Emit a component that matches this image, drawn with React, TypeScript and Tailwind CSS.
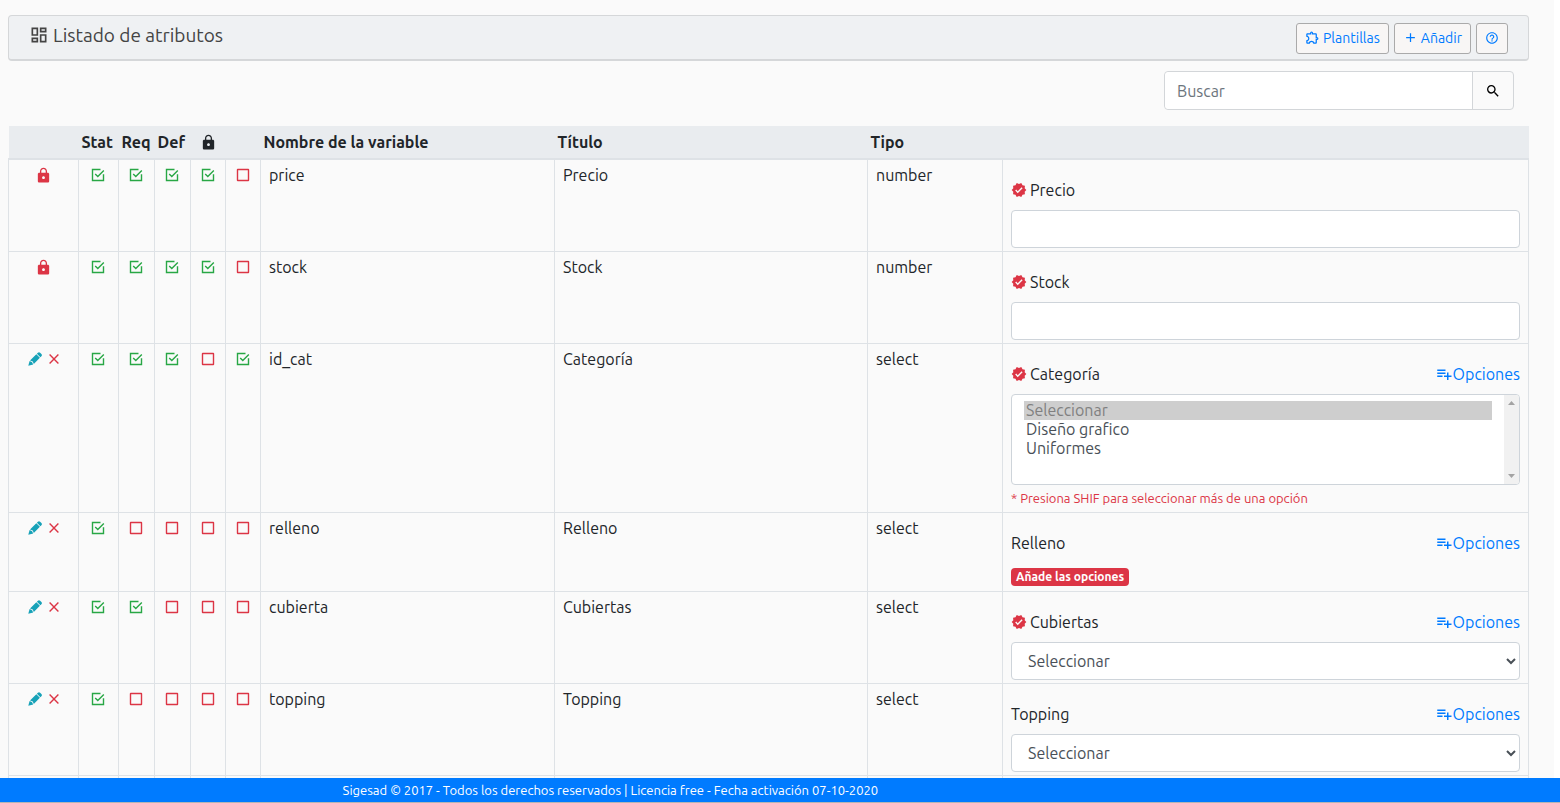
import { useState } from "react";
import {
  MdAdd,
  MdHelpOutline,
  MdLock,
  MdOutlineDashboard,
  MdOutlineExtension,
  MdPlaylistAdd,
  MdSearch,
  MdVerified,
} from "react-icons/md";

type TField = "input" | "multiple" | "empty" | "select";

type TAttribute = {
  name: string;
  title: string;
  type: string;
  locked: boolean;
  required: boolean;
  checks: boolean[];
  field: TField;
};

const attributes: TAttribute[] = [
  { name: "price", title: "Precio", type: "number", locked: true, required: true, checks: [true, true, true, true, false], field: "input" },
  { name: "stock", title: "Stock", type: "number", locked: true, required: true, checks: [true, true, true, true, false], field: "input" },
  { name: "id_cat", title: "Categoría", type: "select", locked: false, required: true, checks: [true, true, true, false, true], field: "multiple" },
  { name: "relleno", title: "Relleno", type: "select", locked: false, required: false, checks: [true, false, false, false, false], field: "empty" },
  { name: "cubierta", title: "Cubiertas", type: "select", locked: false, required: true, checks: [true, true, false, false, false], field: "select" },
  { name: "topping", title: "Topping", type: "select", locked: false, required: false, checks: [true, false, false, false, false], field: "select" },
];

const checkNames = ["Estado", "Requerido", "Defecto", "Bloqueado", "Visible"];

const PencilIcon = () => (
  <svg viewBox="0 0 14 14" className="h-3.5 w-3.5" fill="currentColor">
    <path d="M8.9 1.7 9.9.8a1.6 1.6 0 0 1 2.2 0l1.3 1.3a1.6 1.6 0 0 1 0 2.2l-1 1z" />
    <path d="M8.3 2.2 11.9 5.8 5.8 11.9 4.8 9.5 2 8.4z" />
    <path d="M1.6 9.1 4.1 10.2 5.2 12.4 .3 13.7z" />
  </svg>
);

const CrossIcon = () => (
  <svg viewBox="0 0 10 10" className="h-2.5 w-2.5" fill="none" stroke="currentColor" strokeWidth="1.4">
    <path d="M.6.6 9.4 9.4M9.4.6.6 9.4" />
  </svg>
);

const CheckBox = ({ label, defaultChecked }: { label: string; defaultChecked: boolean }) => {
  const [checked, setChecked] = useState<boolean>(defaultChecked);

  return (
    <span className="inline-grid">
      <input
        type="checkbox"
        aria-label={label}
        checked={checked}
        onChange={() => setChecked(!checked)}
        className="col-start-1 row-start-1 h-3.5 w-3.5 cursor-pointer appearance-none"
      />
      {checked ? (
        <svg viewBox="0 0 14 14" className="pointer-events-none col-start-1 row-start-1 h-3.5 w-3.5 text-[#28a745]" fill="none" stroke="currentColor" strokeWidth="1.4">
          <path d="M9.5 1.5h-8v11h11V6.2" />
          <path d="M4.2 6 6.8 8.5 12.8 2.4" />
        </svg>
      ) : (
        <svg viewBox="0 0 14 14" className="pointer-events-none col-start-1 row-start-1 h-3.5 w-3.5 text-[#dc3545]" fill="none" stroke="currentColor" strokeWidth="1.4">
          <rect x="1.5" y="1.5" width="11" height="11" rx=".3" />
        </svg>
      )}
    </span>
  );
};

const Field = ({ item }: { item: TAttribute }) => {
  const id = `field-${item.name}`;

  return (
    <div className="pt-[18px] pb-[3px]">
      <div className="mb-2 flex h-6 items-center justify-between">
        <label htmlFor={id} className="flex items-center gap-[3px]">
          {item.required && <MdVerified className="h-4 w-4 text-[#dc3545]" />}
          {item.title}
        </label>
        {item.type === "select" && (
          <a href="#opciones" className="flex items-center text-[#007bff]">
            <MdPlaylistAdd className="h-[18px] w-[18px]" />
            Opciones
          </a>
        )}
      </div>

      {item.field === "input" && (
        <input
          id={id}
          type="text"
          className="block h-[38px] w-full rounded border border-[#ced4da] bg-white px-3 text-[#495057]"
        />
      )}

      {item.field === "multiple" && (
        <>
          <div className="flex h-[91px] overflow-hidden rounded border border-[#ced4da] bg-white">
            <select
              id={id}
              multiple
              size={4}
              defaultValue={["0"]}
              className="min-w-0 flex-1 px-3 py-1.5 text-[#495057] [&>option]:px-0.5"
            >
              <option value="0" disabled>
                Seleccionar
              </option>
              <option value="1">Diseño grafico</option>
              <option value="2">Uniformes</option>
            </select>
            {/* Scroll rail */}
            <div className="flex w-[15px] flex-col items-center justify-between bg-[#f1f1f1] py-1.5 text-[#a3a3a3]">
              <svg viewBox="0 0 7 4" className="h-1 w-[7px]" fill="currentColor">
                <path d="M0 4 3.5 0 7 4z" />
              </svg>
              <svg viewBox="0 0 7 4" className="h-1 w-[7px]" fill="currentColor">
                <path d="M0 0 3.5 4 7 0z" />
              </svg>
            </div>
          </div>
          <small className="mt-[3px] mb-px block text-[13px] leading-5 text-[#dc3545]">
            * Presiona SHIF para seleccionar más de una opción
          </small>
        </>
      )}

      {item.field === "empty" && (
        <div className="flex pt-[5px] pb-0.5">
          <span className="rounded bg-[#dc3545] px-[5px] text-xs leading-[18px] font-bold text-white">
            Añade las opciones
          </span>
        </div>
      )}

      {item.field === "select" && (
        <select
          id={id}
          className="block h-[38px] w-full rounded border border-[#ced4da] bg-white px-3 text-[#495057]"
        >
          <option>Seleccionar</option>
        </select>
      )}
    </div>
  );
};

const App = () => {
  const cell = "border border-[#dee2e6] px-2 pt-[3px]";
  const iconCell = "border border-[#dee2e6] pt-[3px] pr-px text-center";
  const headButton =
    "flex h-[31px] items-center gap-[3px] rounded-[3px] border border-[#aaa] bg-[#f8f6f5] px-2 pb-0.5 text-[#007bff]";

  return (
    <div className="flex h-screen flex-col bg-white font-['Ubuntu','Noto_Sans',sans-serif] text-base leading-6 text-[#212529]">
      <main className="mr-1.5 min-h-0 flex-1 overflow-hidden bg-[#fafafa] pt-[15px] pr-[25px] pl-2">
        {/* Title bar */}
        <header className="flex items-start justify-between rounded border border-b-2 border-[#d5d7d9] bg-[#eff1f3] pt-[7px] pr-5 pb-[5px] pl-5">
          <h1 className="flex items-center gap-1 text-[19px] leading-6 text-[#444]">
            <MdOutlineDashboard className="h-5 w-5" />
            Listado de atributos
          </h1>
          <div className="flex gap-[5px] text-sm">
            <button className={headButton}>
              <MdOutlineExtension className="h-[15px] w-[15px]" />
              Plantillas
            </button>
            <button className={headButton}>
              <MdAdd className="h-[15px] w-[15px]" />
              Añadir
            </button>
            <button className={headButton} aria-label="Ayuda">
              <MdHelpOutline className="h-3.5 w-3.5" />
            </button>
          </div>
        </header>

        {/* Search */}
        <form className="mt-2.5 mr-[15px] mb-4 ml-auto flex h-[39px] w-[350px] rounded border border-[#d3d6d9]">
          <input
            type="search"
            aria-label="Buscar"
            placeholder="Buscar"
            className="min-w-0 flex-1 rounded-l bg-white px-3 placeholder:text-[#6c757d]"
          />
          <button
            type="button"
            aria-label="Buscar"
            className="flex w-[41px] items-center justify-center border-l border-[#d3d6d9]"
          >
            <MdSearch className="h-4 w-4 text-black" />
          </button>
        </form>

        {/* Attributes */}
        <table className="w-full table-fixed border-collapse">
          <colgroup>
            <col className="w-[70px]" />
            <col className="w-10" />
            <col className="w-9" />
            <col className="w-9" />
            <col className="w-[35px]" />
            <col className="w-[35px]" />
            <col className="w-[294px]" />
            <col className="w-[313px]" />
            <col className="w-[135px]" />
            <col />
          </colgroup>
          <thead>
            <tr className="h-[33px] border-b-2 border-[#dee2e6] bg-[#e9ecef] text-left [&>th]:pl-[3px] [&>th]:font-bold">
              <th />
              <th>Stat</th>
              <th>Req</th>
              <th>Def</th>
              <th className="pr-[3px]">
                <MdLock className="mx-auto h-[17px] w-[17px]" />
              </th>
              <th />
              <th>Nombre de la variable</th>
              <th>Título</th>
              <th>Tipo</th>
              <th />
            </tr>
          </thead>
          <tbody>
            {attributes.map((item) => (
              <tr key={item.name} className="align-top">
                <td className={iconCell}>
                  <div className="flex h-6 items-center justify-center gap-[7px]">
                    {item.locked ? (
                      <MdLock className="h-[17px] w-[17px] text-[#dc3545]" />
                    ) : (
                      <>
                        <button aria-label="Editar" className="text-[#17a2b8]">
                          <PencilIcon />
                        </button>
                        <button aria-label="Eliminar" className="text-[#dc3545]">
                          <CrossIcon />
                        </button>
                      </>
                    )}
                  </div>
                </td>
                {item.checks.map((check, i) => (
                  <td key={checkNames[i]} className={iconCell}>
                    <div className="flex h-6 items-center justify-center">
                      <CheckBox label={`${checkNames[i]} ${item.name}`} defaultChecked={check} />
                    </div>
                  </td>
                ))}
                <td className={cell}>{item.name}</td>
                <td className={cell}>{item.title}</td>
                <td className={cell}>{item.type}</td>
                <td className="border border-[#dee2e6] px-2">
                  <Field item={item} />
                </td>
              </tr>
            ))}
            <tr className="h-20 [&>td]:border [&>td]:border-[#dee2e6]">
              <td />
              <td />
              <td />
              <td />
              <td />
              <td />
              <td />
              <td />
              <td />
              <td />
            </tr>
          </tbody>
        </table>
      </main>

      <footer className="border-b border-[#b5b5b5] bg-[#007bff] text-[13px] leading-6 text-white">
        <p className="w-[78%] pl-1 text-center">
          Sigesad © 2017 - Todos los derechos reservados | Licencia free - Fecha activación 07-10-2020
        </p>
      </footer>
    </div>
  );
};

export default App;
